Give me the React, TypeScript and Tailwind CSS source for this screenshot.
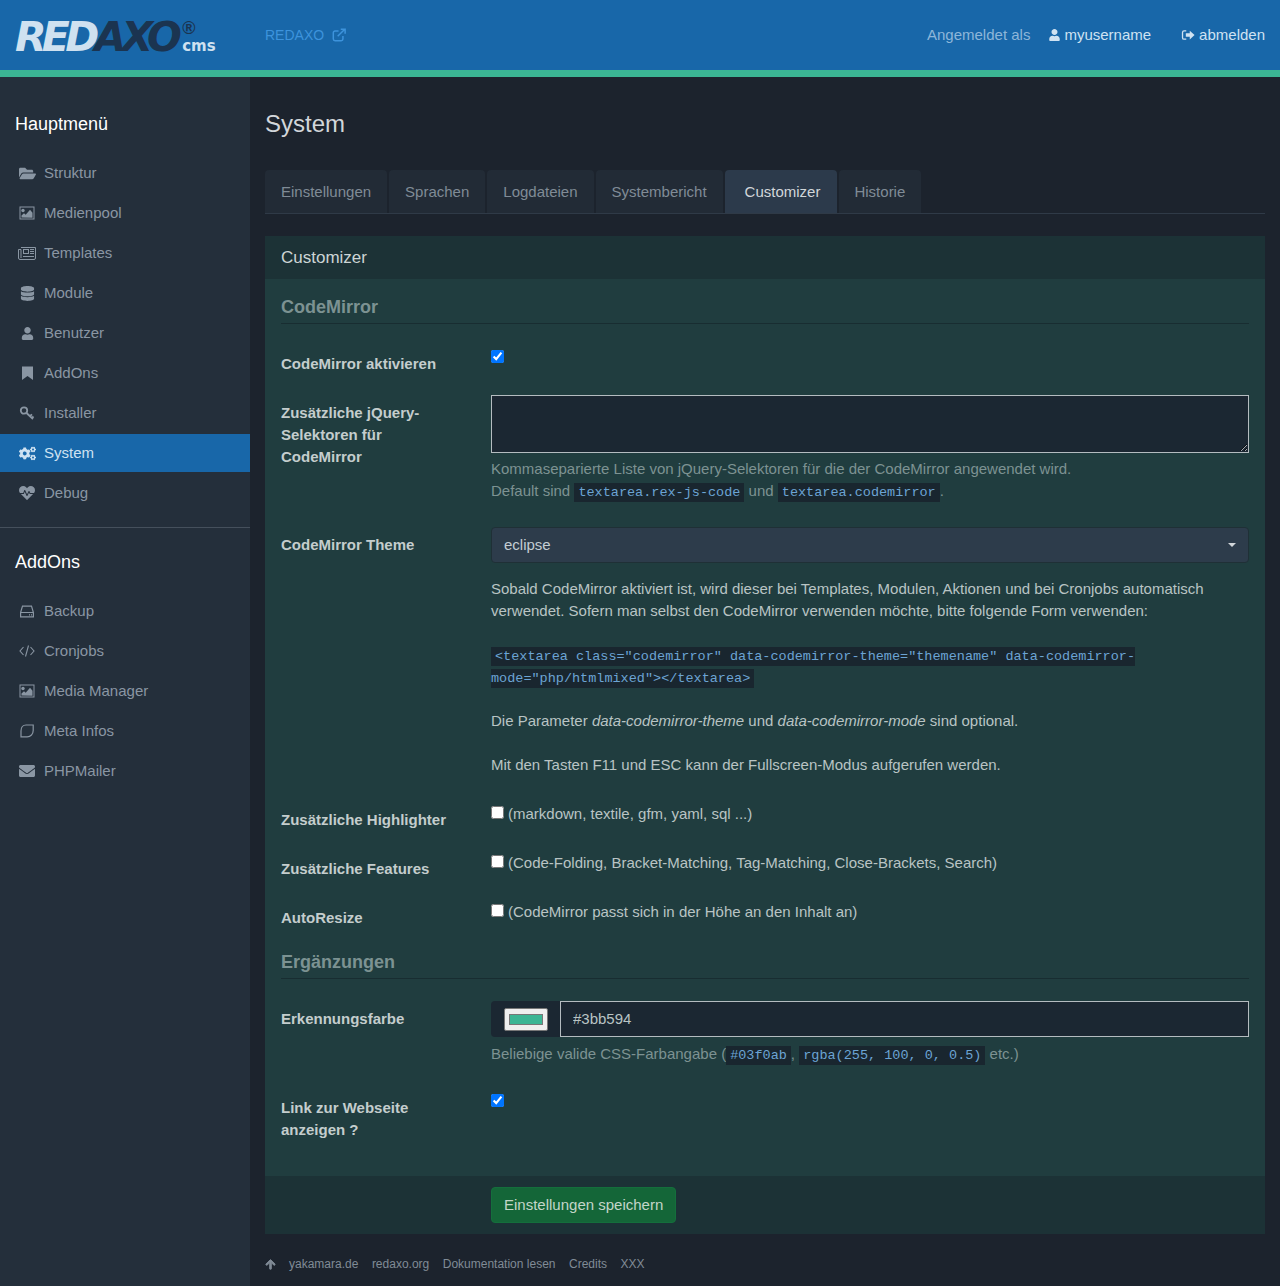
import type { ReactNode } from 'react'
import { FaArrowUp, FaCogs, FaDatabase, FaEnvelope, FaFolderOpen, FaHeartbeat, FaUser } from 'react-icons/fa'

function PictureIcon() {
  return (
    <svg viewBox="0 0 16 14" className="h-[14px] w-4" fill="currentColor">
      <path fillRule="evenodd" d="M0.500 0.500h15v13h-15zM1.500 1.500v11h13v-11z" />
      <circle cx="4" cy="4.500" r="1.700" />
      <path d="M2.500 11.500V9.500l2.500-2.300 1.700 1.500 4.300-5 2.500 3v5z" />
    </svg>
  )
}

function NewspaperIcon() {
  return (
    <svg viewBox="0 0 18 13" className="h-[13px] w-[18px]" fill="none" stroke="currentColor" strokeWidth="1">
      <path d="M3 .5h14.500v10.500a1.500 1.500 0 0 1-1.500 1.500H2A1.500 1.500 0 0 1 .5 11V2.500H3v8.500" />
      <rect x="5.500" y="2.500" width="5" height="4" />
      <path d="M12 2.500h4M12 4.500h4M12 6.500h4M5 9.500h11" />
    </svg>
  )
}

function BookmarkIcon() {
  return (
    <svg viewBox="0 0 11 14" className="h-[14px] w-[11px]" fill="currentColor">
      <path d="M0 .500h11V14L5.500 10 0 14z" />
    </svg>
  )
}

function HddIcon() {
  return (
    <svg viewBox="0 0 14 13" className="h-[13px] w-[14px]" fill="none" stroke="currentColor" strokeWidth="1.200">
      <path d="M.600 7.500L2.500 1.200h9l1.900 6.300v4.300H.600zM.600 7.500h12.800" />
      <path d="M9 9.800h1M11 9.800h1" />
    </svg>
  )
}

function KeyIcon() {
  return (
    <svg viewBox="0 0 16 16" className="h-4 w-4" fill="none" stroke="currentColor">
      <circle cx="5" cy="5.500" r="3.200" strokeWidth="1.800" />
      <path d="M7.500 8l6.500 6M11 11l2-1.600M13 13l1.500-1.500" strokeWidth="1.800" />
    </svg>
  )
}

function CodeIcon() {
  return (
    <svg viewBox="0 0 16 16" className="h-4 w-4" fill="none" stroke="currentColor" strokeWidth="1.100">
      <path d="M4.500 4L1 8l3.500 4M11.500 4L15 8l-3.500 4M9.500 2.500l-3 11" />
    </svg>
  )
}

function NoteIcon() {
  return (
    <svg viewBox="0 0 16 16" className="h-4 w-4" fill="none" stroke="currentColor" strokeWidth="1.200">
      <path d="M7 2h7.200v5.500c0 3.600-2.600 6.300-6 6.300H2V8c0-3.500 2-6 5-6z" />
    </svg>
  )
}

function ExternalIcon() {
  return (
    <svg viewBox="0 0 16 16" className="h-[14px] w-[14px]" fill="none" stroke="currentColor" strokeWidth="1.700">
      <path d="M12.500 9v3.500a2 2 0 0 1-2 2h-7a2 2 0 0 1-2-2v-7a2 2 0 0 1 2-2h4" />
      <path d="M6.500 9.500L14 2M10 1.500h5v5" />
    </svg>
  )
}

function SignOutIcon() {
  return (
    <svg viewBox="0 0 16 16" className="h-[14px] w-[14px]" fill="currentColor">
      <path d="M6 2.500H3.500A2.500 2.500 0 0 0 1 5v6a2.500 2.500 0 0 0 2.500 2.500H6V12H3.500a1 1 0 0 1-1-1V5a1 1 0 0 1 1-1H6z" />
      <path d="M10 3l5.500 5-5.500 5v-3H5.500V6H10z" />
    </svg>
  )
}

const mainMenu: { label: string; icon: ReactNode; active?: boolean }[] = [
  { label: 'Struktur', icon: <FaFolderOpen className="h-[17px] w-[17px]" /> },
  { label: 'Medienpool', icon: <PictureIcon /> },
  { label: 'Templates', icon: <NewspaperIcon /> },
  { label: 'Module', icon: <FaDatabase className="h-[15px] w-[15px]" /> },
  { label: 'Benutzer', icon: <FaUser className="h-[13px] w-[13px]" /> },
  { label: 'AddOns', icon: <BookmarkIcon /> },
  { label: 'Installer', icon: <KeyIcon /> },
  { label: 'System', icon: <FaCogs className="h-[17px] w-[17px]" />, active: true },
  { label: 'Debug', icon: <FaHeartbeat className="h-4 w-4" /> },
]

const addonMenu: { label: string; icon: ReactNode }[] = [
  { label: 'Backup', icon: <HddIcon /> },
  { label: 'Cronjobs', icon: <CodeIcon /> },
  { label: 'Media Manager', icon: <PictureIcon /> },
  { label: 'Meta Infos', icon: <NoteIcon /> },
  { label: 'PHPMailer', icon: <FaEnvelope className="h-4 w-4" /> },
]

const tabs = ['Einstellungen', 'Sprachen', 'Logdateien', 'Systembericht', 'Customizer', 'Historie']

function MenuItem({ label, icon, active }: { label: string; icon: ReactNode; active?: boolean }) {
  return (
    <a
      className={
        active
          ? 'my-px flex h-[38px] items-center bg-[#1867a9] text-[#cfe2f2]'
          : 'flex h-10 items-center text-[#8a96a3]'
      }
    >
      <span className="ml-[18px] flex w-[18px] justify-center">{icon}</span>
      <span className="ml-2">{label}</span>
    </a>
  )
}

function Code({ children }: { children: ReactNode }) {
  return (
    <code className="bg-[#19262f] px-1 py-0.5 font-['Liberation_Mono',monospace] text-[13.5px] leading-none text-[#6ca4d4]">
      {children}
    </code>
  )
}

function Row({
  label,
  className,
  labelClassName = 'pt-[7px]',
  children,
}: {
  label: ReactNode
  className?: string
  labelClassName?: string
  children: ReactNode
}) {
  return (
    <div className={`flex ${className ?? ''}`}>
      <label className={`w-[210px] shrink-0 pr-[30px] font-bold text-[#c4cdcd] ${labelClassName}`}>{label}</label>
      <div className="min-w-0 flex-1">{children}</div>
    </div>
  )
}

function CheckRow({ label, text, className }: { label: string; text: string; className?: string }) {
  return (
    <Row label={label} className={className} labelClassName="pt-[6px]">
      <div className="flex items-start text-[#b9c4c4]">
        <input type="checkbox" className="m-0 mt-[3px] mr-[4px] h-[13px] w-[13px]" />
        <span>{text}</span>
      </div>
    </Row>
  )
}

function Heading({ children, className }: { children: ReactNode; className?: string }) {
  return (
    <h3 className={`border-b border-[#182d31] pb-[6px] text-[18px] leading-5 font-bold text-[#7c9292] ${className ?? ''}`}>
      {children}
    </h3>
  )
}

export default function App() {
  return (
    <div className="flex min-h-screen flex-col bg-[#1c232d] font-['Liberation_Sans',Arial,sans-serif] text-[15px] leading-[22px]">
      <header className="flex h-[77px] shrink-0 items-center border-b-[7px] border-[#3bb594] bg-[#1867a9] pr-[15px]">
        <div className="mt-[2px] ml-[15px] flex w-[200px] items-end font-['DejaVu_Sans',sans-serif] font-bold">
          <div className="flex h-[30px] items-center text-[41px] leading-none tracking-[-4.7px] italic">
            <span className="text-[#cfe1f0]">RED</span>
            <span className="text-[#1b3450]">AXO</span>
          </div>
          <div className="ml-[5px] flex flex-col">
            <span className="mb-[3px] font-['Liberation_Sans',sans-serif] text-[18px] leading-[16px] font-bold text-[#1b3450]">®</span>
            <span className="-mb-px text-[15px] leading-[15px] text-[#cfe1f0]">cms</span>
          </div>
        </div>
        <a className="ml-[50px] flex items-center gap-[8px] text-[14px] text-[#3d93dc]">
          REDAXO <ExternalIcon />
        </a>
        <div className="ml-auto flex items-center text-[#cfe2f2]">
          <span className="text-[#8db6d9]">Angemeldet als</span>
          <span className="ml-[19px] flex items-center gap-[4px]">
            <FaUser className="h-[12px] w-[11px]" /> myusername
          </span>
          <span className="ml-[30px] flex items-center gap-[4px]">
            <SignOutIcon /> abmelden
          </span>
        </div>
      </header>

      <div className="flex flex-1">
        <aside className="w-[250px] shrink-0 bg-[#242f3b] pt-[36px]">
          <h4 className="px-[15px] text-[18px] leading-[22px] text-white">Hauptmenü</h4>
          <nav className="mt-[18px]">
            {mainMenu.map((item) => (
              <MenuItem key={item.label} {...item} />
            ))}
          </nav>
          <div className="mt-[14px] border-t border-[#45505c] pt-[23px]">
            <h4 className="px-[15px] text-[18px] leading-[22px] text-white">AddOns</h4>
            <nav className="mt-[18px]">
              {addonMenu.map((item) => (
                <MenuItem key={item.label} {...item} />
              ))}
            </nav>
          </div>
        </aside>

        <main className="min-w-0 flex-1 px-[15px] pt-[33px]">
          <h1 className="text-[24px] leading-[28px] text-[#d2d6da]">System</h1>

          <div className="mt-[32px] flex gap-[2px] border-b border-[#2f3a47]">
            {tabs.map((tab) =>
              tab === 'Customizer' ? (
                <a key={tab} className="flex h-[43px] items-center rounded-t bg-[#2c3a4b] pr-[17px] pl-5 text-[#d2d6da]">
                  {tab}
                </a>
              ) : (
                <a
                  key={tab}
                  className={`flex h-[43px] items-center rounded-t bg-[#222b36] text-[#808b96] ${tab === 'Historie' ? 'pr-4 pl-[15px]' : 'px-4'}`}
                >
                  {tab}
                </a>
              ),
            )}
          </div>

          <section className="mt-[22px] bg-[#203d3f]">
            <div className="flex h-[43px] items-center bg-[#1c3236] px-4 text-[17px] text-[#cdd5d5]">Customizer</div>

            <div className="px-4 pt-[18px] pb-[35px]">
              <Heading>CodeMirror</Heading>

              <Row label="CodeMirror aktivieren" className="mt-[22px]">
                <input type="checkbox" defaultChecked className="m-0 mt-[4px] block h-[13px] w-[13px]" />
              </Row>

              <Row label={<>Zusätzliche jQuery-Selektoren für CodeMirror</>} className="mt-[20px]">
                <textarea className="block h-[58px] w-full border border-[#b4bcc0] bg-[#1b2732]" />
                <p className="mt-[5px] text-[#7d9292]">
                  Kommaseparierte Liste von jQuery-Selektoren für die der CodeMirror angewendet wird.
                  <br />
                  Default sind <Code>textarea.rex-js-code</Code> und <Code>textarea.codemirror</Code>.
                </p>
              </Row>

              <Row label="CodeMirror Theme" className="mt-[25px]">
                <button className="flex h-9 w-full items-center justify-between rounded border border-[#1f3036] bg-[#2d3c4b] px-3 text-[#c3cdd3]">
                  eclipse
                  <span className="h-0 w-0 border-x-[4px] border-t-[4px] border-x-transparent border-t-[#d2d6da]" />
                </button>
                <div className="mt-[15px] text-[#b9c4c4]">
                  <p>
                    Sobald CodeMirror aktiviert ist, wird dieser bei Templates, Modulen, Aktionen und bei Cronjobs
                    automatisch verwendet. Sofern man selbst den CodeMirror verwenden möchte, bitte folgende Form
                    verwenden:
                  </p>
                  <p className="mt-[22px]">
                    <Code>{'<textarea class="codemirror" data-codemirror-theme="themename" data-codemirror-mode="php/htmlmixed"></textarea>'}</Code>
                  </p>
                  <p className="mt-[22px]">
                    Die Parameter <em>data-codemirror-theme</em> und <em>data-codemirror-mode</em> sind optional.
                  </p>
                  <p className="mt-[22px]">Mit den Tasten F11 und ESC kann der Fullscreen-Modus aufgerufen werden.</p>
                </div>
              </Row>

              <CheckRow
                label="Zusätzliche Highlighter"
                text="(markdown, textile, gfm, yaml, sql ...)"
                className="mt-[27px]"
              />
              <CheckRow
                label="Zusätzliche Features"
                text="(Code-Folding, Bracket-Matching, Tag-Matching, Close-Brackets, Search)"
                className="mt-[21px]"
              />
              <CheckRow
                label="AutoResize"
                text="(CodeMirror passt sich in der Höhe an den Inhalt an)"
                className="mt-[21px]"
              />

              <Heading className="mt-[23px]">Ergänzungen</Heading>

              <Row label="Erkennungsfarbe" className="mt-[22px]">
                <div className="flex h-9">
                  <span className="flex w-[69px] items-center justify-center rounded-l bg-[#1b2732]">
                    <input
                      type="color"
                      defaultValue="#3bb594"
                      className="h-[23px] w-[44px] rounded-[2px] border border-[#777] bg-[#efefef] px-[2px] py-px"
                    />
                  </span>
                  <input
                    type="text"
                    defaultValue="#3bb594"
                    className="min-w-0 flex-1 border border-[#b4bcc0] bg-[#1b2732] px-3 text-[#b9c4c4]"
                  />
                </div>
                <p className="mt-[6px] text-[#7d9292]">
                  Beliebige valide CSS-Farbangabe (<Code>#03f0ab</Code>, <Code>rgba(255, 100, 0, 0.5)</Code> etc.)
                </p>
              </Row>

              <Row label="Link zur Webseite anzeigen ?" className="mt-[25px]">
                <input type="checkbox" defaultChecked className="m-0 mt-[4px] block h-[13px] w-[13px]" />
              </Row>
            </div>

            <div className="flex h-[58px] items-center bg-[#1c3236] pl-[226px]">
              <button className="flex h-9 items-center rounded border border-[#146f3c] bg-[#146638] px-3 text-[#c3d6c9]">
                Einstellungen speichern
              </button>
            </div>
          </section>

          <footer className="mt-[20px] flex h-[20px] items-center text-[12px] text-[#808b96]">
            <FaArrowUp className="h-[11px] w-[11px] [stroke-width:40]" />
            <a className="ml-[13px]">yakamara.de</a>
            <a className="ml-[13.5px]">redaxo.org</a>
            <a className="ml-[13.5px]">Dokumentation lesen</a>
            <a className="ml-[13.5px]">Credits</a>
            <a className="ml-[13.5px]">XXX</a>
          </footer>
        </main>
      </div>
    </div>
  )
}
